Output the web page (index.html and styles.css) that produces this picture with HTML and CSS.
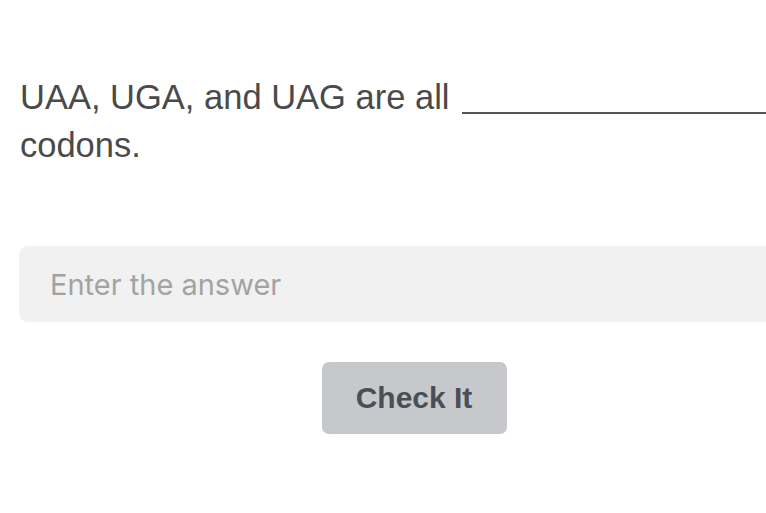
FILE: index.html
```html
<!DOCTYPE html>
<html lang="en">
<head>
<meta charset="utf-8">
<title>Fill in the blank</title>
<link rel="stylesheet" href="styles.css">
</head>
<body>
  <main class="quiz">
    <p class="question">UAA, UGA, and UAG are all <span class="blank"></span> codons.</p>
    <input class="answer" type="text" placeholder="Enter the answer">
    <div class="actions">
      <button class="check" type="button">Check It</button>
    </div>
  </main>
</body>
</html>
```
FILE: styles.css
```css
html, body {
  margin: 0;
  padding: 0;
  background: #ffffff;
  overflow: hidden;
}

.quiz {
  width: 790px;
  margin-left: 19px;
  padding-top: 73px;
  display: flex;
  flex-direction: column;
}

.question {
  margin: 0 0 0 1px;
  font-family: "Liberation Sans", Arial, sans-serif;
  font-size: 34.5px;
  line-height: 48px;
  color: #4a4a4a;
}

/* the gap to fill in: an underline sitting a little below the baseline */
.blank {
  display: inline-block;
  width: 330px;
  height: 29px;
  margin-left: 3px;
  border-bottom: 2px solid #555555;
  vertical-align: -5px;
}

.answer {
  margin-top: 77px;
  height: 76px;
  box-sizing: border-box;
  border: none;
  border-radius: 9px;
  background: #f1f1f1;
  padding: 0 0 0 31px;
  font-family: Inter, "Open Sans", sans-serif;
  font-size: 29px;
  color: #333333;
  outline: none;
}

.answer::placeholder {
  color: #a3a3a3;
}

.actions {
  margin-top: 40px;
  display: flex;
  justify-content: center;
}

.check {
  width: 185px;
  height: 72px;
  border: none;
  border-radius: 7px;
  background: #c7c8cb;
  color: #4b4f55;
  font-family: "Liberation Sans", Arial, sans-serif;
  font-weight: bold;
  font-size: 30px;
  padding: 0;
}
```
